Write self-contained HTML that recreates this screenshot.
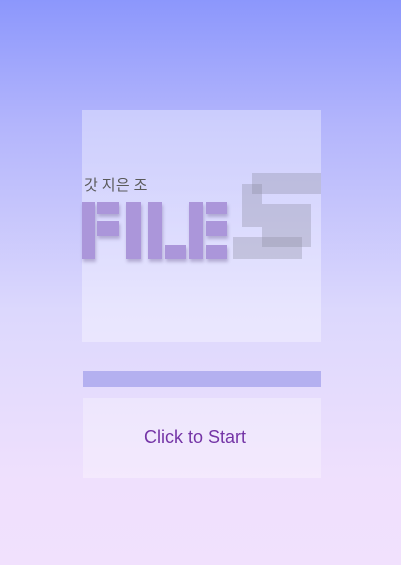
<!DOCTYPE html>
<html><head><meta charset="utf-8"><style>
html,body{margin:0;padding:0;width:401px;height:565px;overflow:hidden}
body{background:linear-gradient(#8c97fc 0%,#b3b5fc 22%,#dcd8fd 55%,#efe0fd 85%,#f1e1fd 100%);position:relative;font-family:"Liberation Sans","Noto Sans CJK KR",sans-serif}
.a{position:absolute}
.p{position:absolute;background:#ab96da;box-shadow:1px 3px 3px rgba(80,60,120,0.3)}
.g{position:absolute;background:rgba(140,140,160,0.34)}
</style></head><body>
<div class="a" style="left:82px;top:110px;width:239px;height:232px;background:rgba(255,255,255,0.35)"></div>
<div class="a" style="left:84px;top:174px;font-size:15px;color:#5a5a5a;font-family:'Noto Sans CJK KR',sans-serif;line-height:22px;letter-spacing:0.3px">갓 지은 조</div>
<div class="p" style="left:82px;top:202px;width:13px;height:57px"></div>
<div class="p" style="left:97px;top:202px;width:22px;height:12px"></div>
<div class="p" style="left:97px;top:221px;width:22px;height:15px"></div>
<div class="p" style="left:126px;top:202px;width:15px;height:57px"></div>
<div class="p" style="left:148px;top:202px;width:14px;height:57px"></div>
<div class="p" style="left:165px;top:245px;width:21px;height:14px"></div>
<div class="p" style="left:189px;top:202px;width:14px;height:57px"></div>
<div class="p" style="left:206px;top:202px;width:21px;height:12px"></div>
<div class="p" style="left:206px;top:221px;width:21px;height:15px"></div>
<div class="p" style="left:206px;top:245px;width:21px;height:14px"></div>
<div class="g" style="left:252px;top:173px;width:69px;height:21px"></div>
<div class="g" style="left:242px;top:184px;width:20px;height:43px"></div>
<div class="g" style="left:262px;top:204px;width:49px;height:43px"></div>
<div class="g" style="left:233px;top:237px;width:69px;height:22px"></div>
<div class="a" style="left:83px;top:371px;width:238px;height:16px;background:#b4b0f0"></div>
<div class="a" style="left:83px;top:398px;width:238px;height:80px;background:rgba(255,255,255,0.3)"></div>
<div class="a" style="left:83px;top:426px;width:224px;text-align:center;font-size:18px;color:#7434a6;line-height:22px">Click to Start</div>
</body></html>
